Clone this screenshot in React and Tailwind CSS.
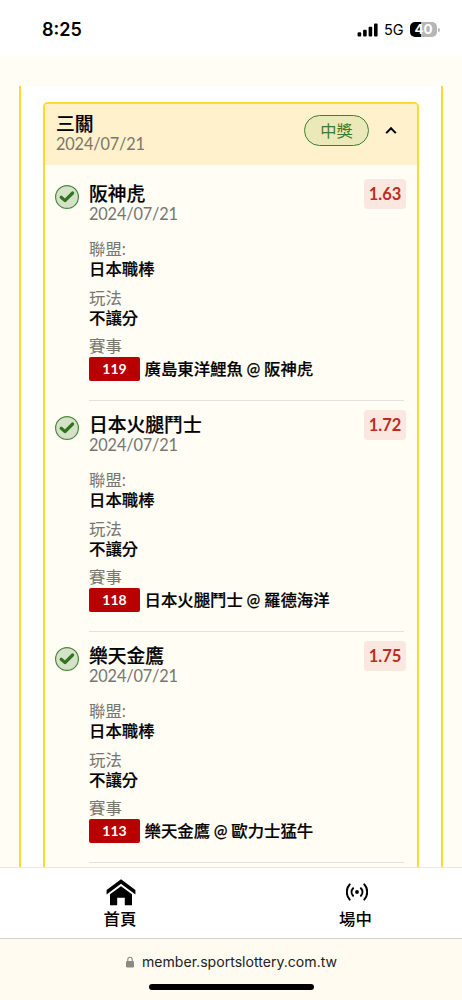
const legs = [
  { id: 1, team: "阪神虎", date: "2024/07/21", odds: "1.63", code: "119", match: "廣島東洋鯉魚 @ 阪神虎" },
  { id: 2, team: "日本火腿鬥士", date: "2024/07/21", odds: "1.72", code: "118", match: "日本火腿鬥士 @ 羅德海洋" },
  { id: 3, team: "樂天金鷹", date: "2024/07/21", odds: "1.75", code: "113", match: "樂天金鷹 @ 歐力士猛牛" },
];

function StatusBar() {
  return (
    <header className="flex h-14 shrink-0 items-center justify-between bg-white pt-[3px] pr-[22px] pl-[42px] font-['Inter']">
      <span className="text-[18px] leading-6 font-semibold">8:25</span>
      <div className="flex items-center">
        <svg width="21" height="14" viewBox="0 0 21 14">
          <rect x="0.6" y="9.2" width="3.6" height="4.3" rx="1" />
          <rect x="6.1" y="6.8" width="3.6" height="6.7" rx="1" />
          <rect x="11.6" y="3.8" width="3.6" height="9.7" rx="1" />
          <rect x="17" y="0.5" width="3.6" height="13" rx="1" />
        </svg>
        <span className="ml-[6px] w-[20px] text-[14.5px] leading-5">5G</span>
        <div className="ml-[6px] flex h-[15px] w-[27px] items-center justify-center rounded-[5px] bg-[linear-gradient(90deg,#000_41%,#b5b5b5_41%)] pt-px text-[13.5px] leading-none font-bold text-white">
          40
        </div>
        <span className="ml-px h-[4px] w-[2px] rounded-r-full bg-[#b5b5b5]" />
      </div>
    </header>
  );
}

function WonIcon() {
  return (
    <svg className="mt-[20px] size-6 shrink-0" viewBox="0 0 24 24" fill="none">
      <circle cx="12" cy="12" r="11.4" fill="#d5e1c9" stroke="#4a8a3c" strokeWidth="1.2" />
      <path d="M6.2 12.2 10 15.6 17.6 8" stroke="#2f7519" strokeWidth="3.2" strokeLinecap="round" strokeLinejoin="round" />
    </svg>
  );
}

function Field({ label, value }) {
  return (
    <div className="mb-[8.5px] text-[16.4px] leading-5">
      <p className="text-[#777672]">{label}</p>
      <p className="font-medium [-webkit-text-stroke:0.2px]">{value}</p>
    </div>
  );
}

function Leg({ leg }) {
  return (
    <div className="flex h-[231px] pr-[13px] pl-[10px]">
      <WonIcon />
      <div className="ml-[10px] h-[236px] min-w-0 flex-1 pt-[19px]">
        <div className="flex h-[55px] justify-between">
          <div>
            <h2 className="text-[18.8px] leading-5 font-medium [-webkit-text-stroke:0.2px]">{leg.team}</h2>
            <p className="text-[16.3px] leading-5 tracking-[-0.15px] text-[#777672]">{leg.date}</p>
          </div>
          <span className="-mt-[5px] -mr-[2px] flex h-[30px] w-[42px] items-center justify-center rounded-[4px] bg-[#f9e7e0] text-[16.5px] font-bold text-[#bd2c23]">
            {leg.odds}
          </span>
        </div>
        <Field label="聯盟:" value="日本職棒" />
        <Field label="玩法" value="不讓分" />
        <p className="text-[16.4px] leading-5 text-[#777672]">賽事</p>
        <div className="mt-px flex h-[24px] items-center">
          <span className="flex h-[24px] w-[51px] items-center justify-center rounded-[2px] bg-[#b80000] pb-px text-[14px] font-bold text-white">
            {leg.code}
          </span>
          <span className="ml-[4.5px] text-[16.4px] leading-6 font-medium whitespace-nowrap [-webkit-text-stroke:0.2px] [word-spacing:-0.4px]">
            {leg.match}
          </span>
        </div>
        <div className="mt-[19px] h-px bg-[#e3e1dc]" />
      </div>
    </div>
  );
}

function TicketHeader() {
  return (
    <div className="flex h-[61px] items-start justify-between bg-[#fff1cc] pt-[10px] pr-[20px] pl-[11px]">
      <div>
        <h1 className="text-[18.8px] leading-5 font-medium [-webkit-text-stroke:0.2px]">三關</h1>
        <p className="text-[16.3px] leading-5 tracking-[-0.15px] text-[#7d7767]">2024/07/21</p>
      </div>
      <div className="mt-px flex items-center">
        <span className="flex h-[31px] w-[65px] items-center justify-center rounded-full border border-[#3f8030] bg-[#ebe8b9] pt-px text-[16.3px] leading-none text-[#3b7b2b]">
          中獎
        </span>
        <svg className="ml-[16px]" width="12" height="8" viewBox="0 0 12 8" fill="none">
          <path d="M1.2 6.1 6 1.2l4.8 4.9" stroke="#000" strokeWidth="2" />
        </svg>
      </div>
    </div>
  );
}

function HomeIcon() {
  return (
    <svg className="ml-[2px]" width="30" height="27" viewBox="0 0 30 27">
      <path d="M15 0.3 29.4 11v4.4L15 4.7.6 15.4V11Z" />
      <path d="M15 7.2 26 15.3V26.3H18.8V18.8H11.2V26.3H4V15.3Z" />
    </svg>
  );
}

function LiveIcon() {
  return (
    <svg width="22" height="18" viewBox="0 0 22 18" fill="none" stroke="#000" strokeWidth="2" strokeLinecap="round">
      <circle cx="11" cy="9" r="1.9" fill="#000" stroke="none" />
      <path d="M7.1 5.2a5.6 5.6 0 0 0 0 7.6M14.9 5.2a5.6 5.6 0 0 1 0 7.6" />
      <path d="M3.7 1.4a11.4 11.4 0 0 0 0 15.2M18.3 1.4a11.4 11.4 0 0 1 0 15.2" />
    </svg>
  );
}

function BottomNav() {
  return (
    <nav className="flex h-[72px] shrink-0 justify-between border-t border-b border-t-[#e8e7e3] border-b-[#d2d2d2] bg-white px-[80px] text-[16.4px] leading-6 font-medium">
      <a className="flex w-20 flex-col items-center">
        <span className="mt-[10px] flex h-[29px] items-center">
          <HomeIcon />
        </span>
        首頁
      </a>
      <a className="-mr-[13.5px] flex w-20 flex-col items-center">
        <span className="mt-[9px] flex h-[30px] items-center pl-[2px]">
          <LiveIcon />
        </span>
        場中
      </a>
    </nav>
  );
}

function AddressBar() {
  return (
    <footer className="flex h-[61px] shrink-0 flex-col items-center bg-[#fffbf1]">
      <div className="mt-[13px] flex items-center gap-[8px] pl-px font-['Inter'] text-[14.1px] leading-5 text-[#222]">
        <svg width="8" height="12" viewBox="0 0 8 12" fill="none">
          <path d="M1.8 5.5V3.4a2.2 2.2 0 0 1 4.4 0v2.1" stroke="#8b8a87" strokeWidth="1.1" />
          <rect x="0" y="5" width="8" height="6.5" rx="1.2" fill="#8b8a87" />
        </svg>
        member.sportslottery.com.tw
      </div>
      <div className="mt-[12px] h-[6px] w-[165px] rounded-full bg-black" />
    </footer>
  );
}

export default function App() {
  return (
    <div className="flex h-[1000px] w-[462px] flex-col overflow-hidden bg-[#fffdf4] font-['Lato','Noto_Sans_CJK_TC',sans-serif] text-black">
      <StatusBar />
      <main className="min-h-0 flex-1 overflow-hidden pt-[30px]">
        <section className="mx-[19px] h-[800px] border-x-2 border-[#ffd932] bg-white px-[22px] pt-[16px]">
          <div className="h-[800px] overflow-hidden rounded-[5px] border-2 border-[#ffd932] bg-[#fffdf4]">
            <TicketHeader />
            {legs.map((leg) => (
              <Leg key={leg.id} leg={leg} />
            ))}
          </div>
        </section>
      </main>
      <BottomNav />
      <AddressBar />
    </div>
  );
}
